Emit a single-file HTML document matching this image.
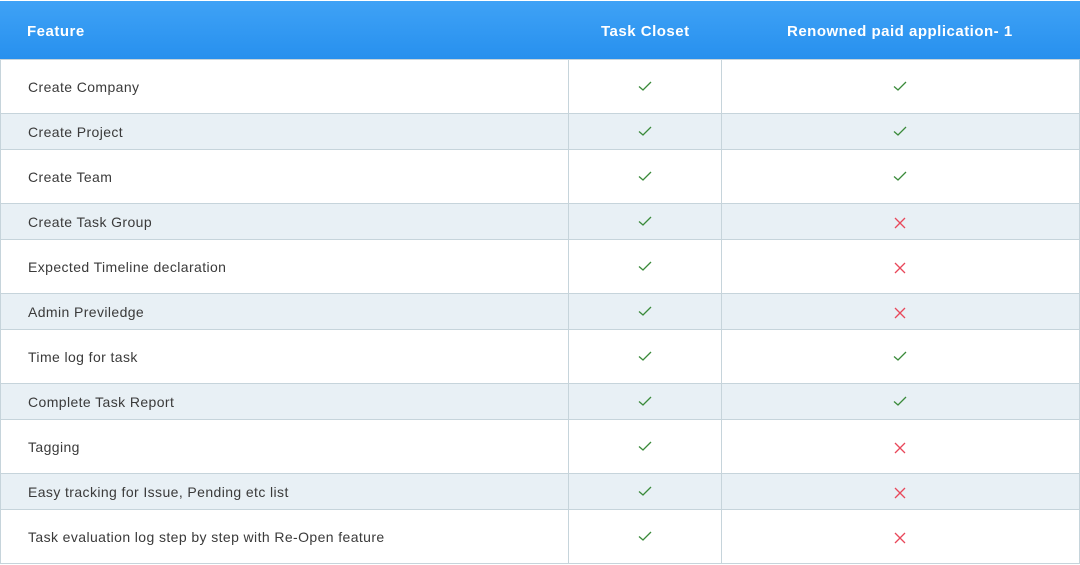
<!DOCTYPE html>
<html><head><style>
body{margin:0;width:1080px;height:564px;overflow:hidden;background:#fff;font-family:"Liberation Sans",sans-serif;}
.hd{position:absolute;left:0;top:1px;width:1080px;height:58px;background:linear-gradient(#3fa2f6,#2790ee);color:#fff;font-weight:bold;font-size:15px;letter-spacing:0.5px;}
.hd div{position:absolute;top:2px;line-height:58px;}
.r{position:absolute;left:0;width:1079px;border-top:1px solid #c6d4db;border-left:1px solid #c6d4db;box-sizing:border-box;}
.r.a{background:#e8f0f5}
.r span{position:absolute;left:27px;top:0;font-size:14px;color:#3a3a3a;letter-spacing:0.4px;}
.v{position:absolute;top:59px;width:1px;height:505px;background:#c6d4db}
.b{position:absolute;left:0;top:563px;width:1080px;height:1px;background:#c6d4db}
svg{position:absolute}
</style></head><body>
<div class="hd"><div style="left:27px">Feature</div><div style="left:601px">Task Closet</div><div style="left:787px">Renowned paid application- 1</div></div>
<div id="rows"></div>
<div class="v" style="left:568px"></div><div class="v" style="left:721px"></div><div class="v" style="left:1079px"></div><div class="b"></div>
<script>
var items=[["Create Company",1],["Create Project",1],["Create Team",1],["Create Task Group",0],["Expected Timeline declaration",0],["Admin Previledge",0],["Time log for task",1],["Complete Task Report",1],["Tagging",0],["Easy tracking for Issue, Pending etc list",0],["Task evaluation log step by step with Re-Open feature",0]];
var y=59,h='';
var ck=function(x,c){return '<svg style="left:'+(x-7)+'px;top:'+(c-6)+'px" width="14" height="12"><path d="M1 6.5L5 10L13 2" fill="none" stroke="#3a8a3a" stroke-width="1.3"/></svg>'};
var xx=function(x,c){return '<svg style="left:'+(x-6)+'px;top:'+(c-5)+'px" width="12" height="12"><path d="M1 1L11 11M11 1L1 11" fill="none" stroke="#e8485a" stroke-width="1.3"/></svg>'};
items.forEach(function(it,i){var ht=i%2?36:54;var c=y+ht/2;
h+='<div class="r'+(i%2?' a':'')+'" style="top:'+y+'px;height:'+ht+'px"><span style="line-height:'+(ht+1)+'px">'+it[0]+'</span></div>';
h+=ck(645,c)+(it[1]?ck(900,c):xx(900,c+1));y+=ht;});
document.getElementById('rows').innerHTML=h;
</script>
</body></html>
